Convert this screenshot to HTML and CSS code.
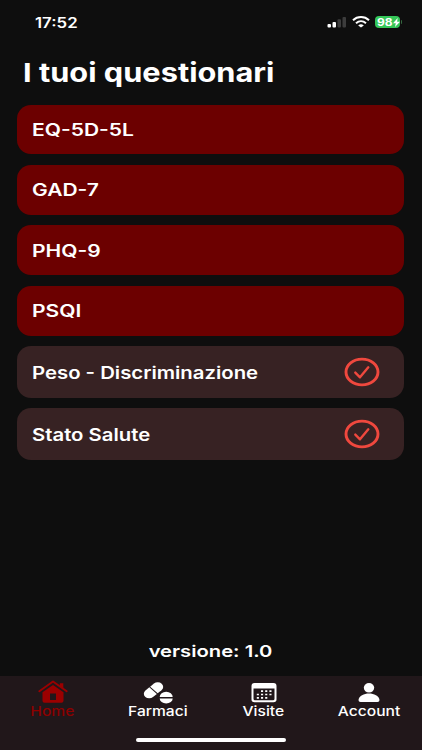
FILE: index.html
```html
<!DOCTYPE html>
<html lang="it">
<head>
<meta charset="utf-8">
<meta name="viewport" content="width=device-width, initial-scale=1">
<title>I tuoi questionari</title>
<link rel="stylesheet" href="styles.css">
</head>
<body>
<div class="app">
  <header class="status">
    <span class="time wide">17:52</span>
    <div class="status-icons">
      <svg class="signal" viewBox="0 0 20 12"><rect x="0.500" y="8" width="3.500" height="3.600" rx="1" fill="#fff"/><rect x="5.500" y="6" width="3.500" height="5.600" rx="1" fill="#fff"/><rect x="10.500" y="3.300" width="3.500" height="8.300" rx="1" fill="#3c3c3c"/><rect x="15.500" y="1" width="3.500" height="10.600" rx="1" fill="#3c3c3c"/></svg>
      <svg class="wifi" viewBox="0 0 18 12" fill="none" stroke="#fff" stroke-width="2"><path d="M1 4.200C5.500 0 12.500 0 17 4.200"/><path d="M4 7.200C7 4.600 11 4.600 14 7.200"/><path d="M9 11.500L6.200 9.400Q9 7.300 11.800 9.400Z" fill="#fff" stroke="none"/></svg>
      <div class="battery"><span class="level wide">98</span><svg class="bolt" viewBox="0 0 7 9"><path d="M4.700 0L0 5.200H2.800L2 9L7 3.700H4.100Z" fill="#fff"/></svg></div>
      <span class="battery-tip"></span>
    </div>
  </header>
  <main>
    <h1><span class="wide">I tuoi questionari</span></h1>
    <ul class="list">
      <li class="card"><span class="wide caps">EQ-5D-5L</span></li>
      <li class="card"><span class="wide caps">GAD-7</span></li>
      <li class="card"><span class="wide caps">PHQ-9</span></li>
      <li class="card"><span class="wide caps">PSQI</span></li>
      <li class="card done"><span class="wide">Peso - Discriminazione</span><svg class="check" viewBox="0 0 36 30" fill="none" stroke="#f0483e"><ellipse cx="18" cy="15" rx="16" ry="12.900" stroke-width="2.900"/><path d="M11.300 15.600L16 20.300L24.300 10.300" stroke-width="2.400" stroke-linecap="round" stroke-linejoin="round"/></svg></li>
      <li class="card done"><span class="wide">Stato Salute</span><svg class="check" viewBox="0 0 36 30" fill="none" stroke="#f0483e"><ellipse cx="18" cy="15" rx="16" ry="12.900" stroke-width="2.900"/><path d="M11.300 15.600L16 20.300L24.300 10.300" stroke-width="2.400" stroke-linecap="round" stroke-linejoin="round"/></svg></li>
    </ul>
  </main>
  <p class="version"><span class="wide">versione: 1.0</span></p>
  <footer>
    <nav class="tabs">
      <a class="tab active"><svg viewBox="0 0 32 24" fill="#9b0000"><path d="M2.300 11.200L16 1.500L29.700 11.200" fill="none" stroke="#9b0000" stroke-width="1.900" stroke-linejoin="round" stroke-linecap="round"/><path d="M22.800 3.200H26.300V8.400L22.800 6Z"/><path fill-rule="evenodd" d="M16 4.900L26.500 12.300V20.700Q26.500 22.700 24.500 22.700H7.500Q5.500 22.700 5.500 20.700V12.300ZM13 13.500V20H19V13.500Z"/></svg><span class="wide">Home</span></a>
      <a class="tab"><svg viewBox="0 0 32 24" fill="#fff"><g transform="translate(11.500 10.300) scale(1.180 1) rotate(-44)"><path d="M-.5 -4.600H-5A4.600 4.600 0 0 0 -5 4.600H-.5Z"/><path d="M.5 -4.600H5A4.600 4.600 0 0 1 5 4.600H.5Z"/></g><path d="M17.700 17A6.500 5.300 0 0 1 30.700 17Z"/><path d="M17.700 18.500A6.500 5 0 0 0 30.700 18.500Z"/></svg><span class="wide">Farmaci</span></a>
      <a class="tab"><svg viewBox="0 0 32 24" fill="#fff"><path fill-rule="evenodd" d="M6.500 3H25.500Q28.500 3 28.500 6V19.500Q28.500 22.300 25.500 22.300H6.500Q3.500 22.300 3.500 19.500V6Q3.500 3 6.500 3ZM5.500 8.500V18.800Q5.500 20.300 7 20.300H25Q26.500 20.300 26.500 18.800V8.500Z"/><path d="M13 11.200H24M8.800 14.500H24M8.800 17.800H19.800" stroke="#fff" stroke-width="1.700" stroke-dasharray="2.100 2.100"/></svg><span class="wide">Visite</span></a>
      <a class="tab"><svg viewBox="0 0 32 24" fill="#fff"><ellipse cx="16" cy="7.800" rx="5.200" ry="4.800"/><path d="M5.500 20C6.500 11.200 25.500 11.200 26.500 20Q26.500 22 24.500 22H7.500Q5.500 22 5.500 20Z"/></svg><span class="wide">Account</span></a>
    </nav>
    <div class="home-bar"></div>
  </footer>
</div>
</body>
</html>
```
FILE: styles.css
```css
* { box-sizing: border-box; }
body { margin: 0; background: #0e0e0e; color: #fff; font-family: Inter, "Liberation Sans", sans-serif; }
.app { height: 750px; display: flex; flex-direction: column; }
.wide { display: inline-block; white-space: nowrap; transform: scaleX(1.2); transform-origin: left center; }
.status { height: 44px; display: flex; justify-content: space-between; padding: 0 20px 0 35px; }
.time { margin-top: 13px; font-size: 14px; line-height: 19px; font-weight: 600; }
.status-icons { display: flex; align-items: center; height: 20px; margin-top: 12px; }
.signal { width: 20px; height: 12px; margin-right: 5px; }
.wifi { width: 18px; height: 12px; margin-right: 5px; }
.battery { width: 25px; height: 12px; background: #35c759; border-radius: 4px; display: flex; align-items: center; padding-left: 2px; }
.level { font-size: 10px; line-height: 12px; font-weight: 700; width: 16px; }
.bolt { width: 7px; height: 9px; flex: none; }
.battery-tip { width: 1px; height: 4px; margin-left: 1px; background: #35683f; border-radius: 0 1px 1px 0; }
h1 { margin: 12px 0 0 23px; font-size: 26px; line-height: 34px; font-weight: 700; }
h1 .wide { transform: scaleX(1.183); }
.list { list-style: none; margin: 14.700px 17.600px 0 17.400px; padding: 0; display: flex; flex-direction: column; gap: 10.600px; }
.card { height: 49.800px; border-radius: 14px; background: #6c0000; display: flex; align-items: center; justify-content: space-between; padding: 0 24px 0 14.500px; font-size: 17px; font-weight: 600; }
.card .wide { transform: scaleX(1.195); padding-top: 1px; }
.card .caps { transform: scaleX(1.235); }
.card.done { height: 51.600px; background: #372223; }
.check { width: 36px; height: 30px; }
.version { margin: auto 0 14px; text-align: center; font-size: 16.500px; line-height: 22px; font-weight: 600; }
.version .wide { transform: scaleX(1.225); }
.version .wide, .tab .wide { transform-origin: center; }
footer { height: 74px; background: #21171a; }
.tabs { display: grid; grid-template-columns: repeat(4, 1fr); }
.tab { display: flex; flex-direction: column; align-items: center; padding-top: 4px; font-size: 13px; font-weight: 500; line-height: 16px; }
.tab svg { width: 32px; height: 24px; }
.active { color: #8c0000; }
.tab .wide { height: 15px; line-height: 15px; }
.home-bar { width: 150px; height: 4px; margin: 19px auto 0; border-radius: 2px; background: #fff; }
```
